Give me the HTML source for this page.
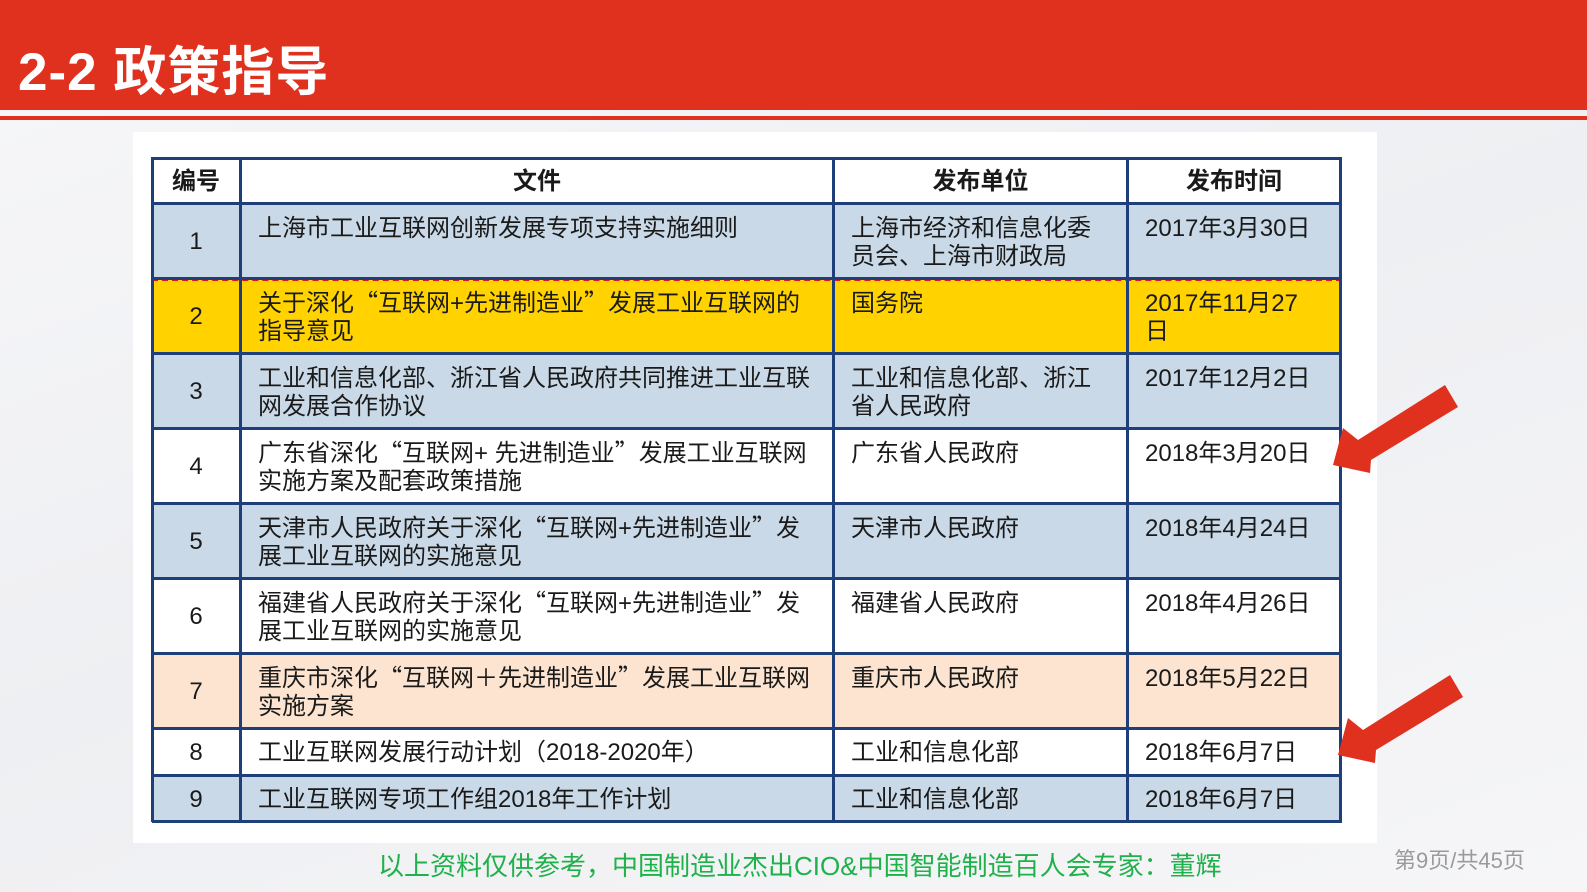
<!DOCTYPE html>
<html><head><meta charset="utf-8"><style>
body{margin:0;width:1587px;height:892px;overflow:hidden;background:linear-gradient(160deg,#f7f7f9 0%,#eeeff2 50%,#f6f6f8 100%);position:relative;font-family:"Liberation Sans","Noto Sans CJK SC",sans-serif;}
.hdr{position:absolute;left:0;top:0;width:1587px;height:110px;background:#e0301e;}
.hl{position:absolute;left:0;top:116px;width:1587px;height:4px;background:#e0301e;}
.title{position:absolute;left:18px;top:38px;color:#fff;font-size:53px;font-weight:bold;line-height:70px;letter-spacing:1px;}
.panel{position:absolute;left:133px;top:132px;width:1244px;height:711px;background:#fff;}
.c{position:absolute;font-size:24px;color:#1a1a1a;line-height:28px;box-sizing:border-box;}
.q{font-family:"Noto Sans CJK SC",sans-serif;line-height:0;}
.r{position:absolute;left:152px;width:1190px;}
.v{position:absolute;top:157px;height:665px;width:3px;background:#1f3f7a;}
.h{position:absolute;left:152px;width:1190px;height:3px;background:#1f3f7a;}
</style></head><body>
<div class="hdr"></div><div class="hl"></div>
<div class="title">2-2 政策指导</div>
<div class="panel"></div>
<div class="r" style="top:157px;height:47px;background:#fff"></div>
<div class="r" style="top:204px;height:75px;background:#c9d9e7"></div>
<div class="r" style="top:279px;height:75px;background:#ffd200"></div>
<div class="r" style="top:354px;height:75px;background:#c9d9e7"></div>
<div class="r" style="top:429px;height:75px;background:#fff"></div>
<div class="r" style="top:504px;height:75px;background:#c9d9e7"></div>
<div class="r" style="top:579px;height:75px;background:#fff"></div>
<div class="r" style="top:654px;height:75px;background:#fce4d0"></div>
<div class="r" style="top:729px;height:47px;background:#fff"></div>
<div class="r" style="top:776px;height:46px;background:#c9d9e7"></div>
<div style="position:absolute;left:152px;top:279px;width:1186px;height:72px;border:2px dashed #e8101e;"></div>
<div class="h" style="top:157px"></div><div class="h" style="top:202px"></div><div class="h" style="top:277px"></div><div class="h" style="top:352px"></div><div class="h" style="top:427px"></div><div class="h" style="top:502px"></div><div class="h" style="top:577px"></div><div class="h" style="top:652px"></div><div class="h" style="top:727px"></div><div class="h" style="top:774px"></div><div class="h" style="top:820px"></div>
<div class="v" style="left:151px"></div><div class="v" style="left:239px"></div><div class="v" style="left:832px"></div><div class="v" style="left:1126px"></div><div class="v" style="left:1339px"></div>
<div class="c" style="left:152px;top:168px;width:88px;text-align:center;font-weight:bold">编号</div>
<div class="c" style="left:241px;top:168px;width:592px;text-align:center;font-weight:bold">文件</div>
<div class="c" style="left:834px;top:168px;width:293px;text-align:center;font-weight:bold">发布单位</div>
<div class="c" style="left:1128px;top:168px;width:212px;text-align:center;font-weight:bold">发布时间</div>

<div class="c" style="left:152px;top:228px;width:88px;text-align:center">1</div>
<div class="c" style="left:258px;top:215px;width:565px">上海市工业互联网创新发展专项支持实施细则</div>
<div class="c" style="left:851px;top:215px;width:250px">上海市经济和信息化委员会、上海市财政局</div>
<div class="c" style="left:1145px;top:215px;width:190px">2017年3月30日</div>

<div class="c" style="left:152px;top:303px;width:88px;text-align:center">2</div>
<div class="c" style="left:258px;top:290px;width:565px">关于深化<span class="q">“</span>互联网+先进制造业<span class="q">”</span>发展工业互联网的指导意见</div>
<div class="c" style="left:851px;top:290px;width:250px">国务院</div>
<div class="c" style="left:1145px;top:290px;width:172px">2017年11月27日</div>

<div class="c" style="left:152px;top:378px;width:88px;text-align:center">3</div>
<div class="c" style="left:258px;top:365px;width:565px">工业和信息化部、浙江省人民政府共同推进工业互联网发展合作协议</div>
<div class="c" style="left:851px;top:365px;width:250px">工业和信息化部、浙江省人民政府</div>
<div class="c" style="left:1145px;top:365px;width:190px">2017年12月2日</div>

<div class="c" style="left:152px;top:453px;width:88px;text-align:center">4</div>
<div class="c" style="left:258px;top:440px;width:565px">广东省深化<span class="q">“</span>互联网+ 先进制造业<span class="q">”</span>发展工业互联网实施方案及配套政策措施</div>
<div class="c" style="left:851px;top:440px;width:250px">广东省人民政府</div>
<div class="c" style="left:1145px;top:440px;width:190px">2018年3月20日</div>

<div class="c" style="left:152px;top:528px;width:88px;text-align:center">5</div>
<div class="c" style="left:258px;top:515px;width:555px">天津市人民政府关于深化<span class="q">“</span>互联网+先进制造业<span class="q">”</span>发展工业互联网的实施意见</div>
<div class="c" style="left:851px;top:515px;width:250px">天津市人民政府</div>
<div class="c" style="left:1145px;top:515px;width:190px">2018年4月24日</div>

<div class="c" style="left:152px;top:603px;width:88px;text-align:center">6</div>
<div class="c" style="left:258px;top:590px;width:555px">福建省人民政府关于深化<span class="q">“</span>互联网+先进制造业<span class="q">”</span>发展工业互联网的实施意见</div>
<div class="c" style="left:851px;top:590px;width:250px">福建省人民政府</div>
<div class="c" style="left:1145px;top:590px;width:190px">2018年4月26日</div>

<div class="c" style="left:152px;top:678px;width:88px;text-align:center">7</div>
<div class="c" style="left:258px;top:665px;width:565px">重庆市深化<span class="q">“</span>互联网＋先进制造业<span class="q">”</span>发展工业互联网实施方案</div>
<div class="c" style="left:851px;top:665px;width:250px">重庆市人民政府</div>
<div class="c" style="left:1145px;top:665px;width:190px">2018年5月22日</div>

<div class="c" style="left:152px;top:739px;width:88px;text-align:center">8</div>
<div class="c" style="left:258px;top:739px;width:570px">工业互联网发展行动计划（2018-2020年）</div>
<div class="c" style="left:851px;top:739px;width:250px">工业和信息化部</div>
<div class="c" style="left:1145px;top:739px;width:190px">2018年6月7日</div>

<div class="c" style="left:152px;top:786px;width:88px;text-align:center">9</div>
<div class="c" style="left:258px;top:786px;width:570px">工业互联网专项工作组2018年工作计划</div>
<div class="c" style="left:851px;top:786px;width:250px">工业和信息化部</div>
<div class="c" style="left:1145px;top:786px;width:190px">2018年6月7日</div>

<svg width="1587" height="892" style="position:absolute;left:0;top:0">
<polygon fill="#e0301e" points="1333,465 1343,428 1358,440 1445,385 1458,407 1371,460 1370,473"/>
<polygon fill="#e0301e" points="1338,755 1348,718 1363,730 1450,675 1463,697 1376,750 1375,763"/>
</svg>
<div class="c" style="left:378px;top:850px;font-size:26px;line-height:32px;color:#1fb14a;white-space:nowrap">以上资料仅供参考，中国制造业杰出CIO&amp;中国智能制造百人会专家：董辉</div>
<div class="c" style="left:1394px;top:847px;font-size:22px;color:#9a9a9a;white-space:nowrap">第9页/共45页</div>
</body></html>
